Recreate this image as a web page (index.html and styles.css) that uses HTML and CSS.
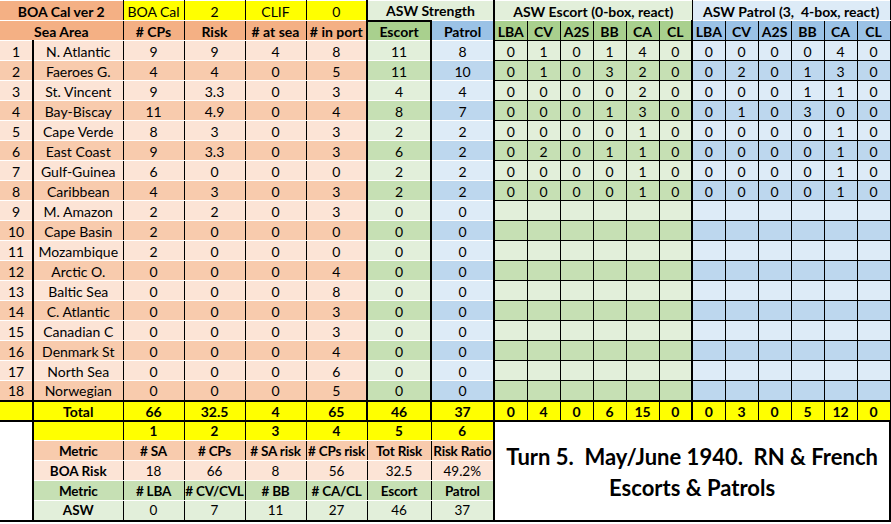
FILE: index.html
```html
<!DOCTYPE html>
<html>
<head>
<meta charset="utf-8">
<link rel="stylesheet" href="styles.css">
</head>
<body>
<table class="sheet">
<colgroup>
<col class="c-n"><col class="c-sa"><col class="c-o"><col class="c-o"><col class="c-o"><col class="c-o"><col class="c-g"><col class="c-b">
<col class="c-s"><col class="c-s"><col class="c-s"><col class="c-s"><col class="c-s"><col class="c-s">
<col class="c-s"><col class="c-s"><col class="c-s"><col class="c-s"><col class="c-s"><col class="c-s">
</colgroup>
<tbody>
<tr class="hdr1">
<td colspan="2" class="h-or bold first">BOA Cal ver 2</td>
<td class="y">BOA Cal</td><td class="y">2</td><td class="y">CLIF</td><td class="y">0</td>
<td colspan="2" class="h-gl bold tl">ASW Strength</td>
<td colspan="6" class="h-gl bold tl">ASW Escort (0-box, react)</td>
<td colspan="6" class="h-bl bold">ASW Patrol (3,&nbsp; 4-box, react)</td>
</tr>
<tr class="hdr2 bold">
<td colspan="2" class="h-or first">Sea Area</td>
<td class="h-or">#&nbsp;CPs</td><td class="h-or">Risk</td><td class="h-or">#&nbsp;at sea</td><td class="h-or"># in port</td>
<td class="h-gm tl tt">Escort</td><td class="h-bm tl">Patrol</td>
<td class="h-gm sub tl">LBA</td><td class="h-gm sub">CV</td><td class="h-gm sub">A2S</td><td class="h-gm sub">BB</td><td class="h-gm sub">CA</td><td class="h-gm sub">CL</td>
<td class="h-bm sub tl">LBA</td><td class="h-bm sub">CV</td><td class="h-bm sub">A2S</td><td class="h-bm sub">BB</td><td class="h-bm sub">CA</td><td class="h-bm sub">CL</td>
</tr>
<tr class="lt"><td class="n first">1</td><td class="o tl">N. Atlantic</td><td class="o">9</td><td class="o">9</td><td class="o">4</td><td class="o">8</td><td class="g tl">11</td><td class="b tl">8</td>
<td class="g sub tl">0</td><td class="g sub">1</td><td class="g sub">0</td><td class="g sub">1</td><td class="g sub">4</td><td class="g sub">0</td>
<td class="b sub tl">0</td><td class="b sub">0</td><td class="b sub">0</td><td class="b sub">0</td><td class="b sub">4</td><td class="b sub">0</td></tr>
<tr class="dk"><td class="n first">2</td><td class="o tl">Faeroes G.</td><td class="o">4</td><td class="o">4</td><td class="o">0</td><td class="o">5</td><td class="g tl">11</td><td class="b tl">10</td>
<td class="g sub tl">0</td><td class="g sub">1</td><td class="g sub">0</td><td class="g sub">3</td><td class="g sub">2</td><td class="g sub">0</td>
<td class="b sub tl">0</td><td class="b sub">2</td><td class="b sub">0</td><td class="b sub">1</td><td class="b sub">3</td><td class="b sub">0</td></tr>
<tr class="lt"><td class="n first">3</td><td class="o tl">St. Vincent</td><td class="o">9</td><td class="o">3.3</td><td class="o">0</td><td class="o">3</td><td class="g tl">4</td><td class="b tl">4</td>
<td class="g sub tl">0</td><td class="g sub">0</td><td class="g sub">0</td><td class="g sub">0</td><td class="g sub">2</td><td class="g sub">0</td>
<td class="b sub tl">0</td><td class="b sub">0</td><td class="b sub">0</td><td class="b sub">1</td><td class="b sub">1</td><td class="b sub">0</td></tr>
<tr class="dk"><td class="n first">4</td><td class="o tl">Bay-Biscay</td><td class="o">11</td><td class="o">4.9</td><td class="o">0</td><td class="o">4</td><td class="g tl">8</td><td class="b tl">7</td>
<td class="g sub tl">0</td><td class="g sub">0</td><td class="g sub">0</td><td class="g sub">1</td><td class="g sub">3</td><td class="g sub">0</td>
<td class="b sub tl">0</td><td class="b sub">1</td><td class="b sub">0</td><td class="b sub">3</td><td class="b sub">0</td><td class="b sub">0</td></tr>
<tr class="lt"><td class="n first">5</td><td class="o tl">Cape Verde</td><td class="o">8</td><td class="o">3</td><td class="o">0</td><td class="o">3</td><td class="g tl">2</td><td class="b tl">2</td>
<td class="g sub tl">0</td><td class="g sub">0</td><td class="g sub">0</td><td class="g sub">0</td><td class="g sub">1</td><td class="g sub">0</td>
<td class="b sub tl">0</td><td class="b sub">0</td><td class="b sub">0</td><td class="b sub">0</td><td class="b sub">1</td><td class="b sub">0</td></tr>
<tr class="dk"><td class="n first">6</td><td class="o tl">East Coast</td><td class="o">9</td><td class="o">3.3</td><td class="o">0</td><td class="o">3</td><td class="g tl">6</td><td class="b tl">2</td>
<td class="g sub tl">0</td><td class="g sub">2</td><td class="g sub">0</td><td class="g sub">1</td><td class="g sub">1</td><td class="g sub">0</td>
<td class="b sub tl">0</td><td class="b sub">0</td><td class="b sub">0</td><td class="b sub">0</td><td class="b sub">1</td><td class="b sub">0</td></tr>
<tr class="lt"><td class="n first">7</td><td class="o tl">Gulf-Guinea</td><td class="o">6</td><td class="o">0</td><td class="o">0</td><td class="o">0</td><td class="g tl">2</td><td class="b tl">2</td>
<td class="g sub tl">0</td><td class="g sub">0</td><td class="g sub">0</td><td class="g sub">0</td><td class="g sub">1</td><td class="g sub">0</td>
<td class="b sub tl">0</td><td class="b sub">0</td><td class="b sub">0</td><td class="b sub">0</td><td class="b sub">1</td><td class="b sub">0</td></tr>
<tr class="dk"><td class="n first">8</td><td class="o tl">Caribbean</td><td class="o">4</td><td class="o">3</td><td class="o">0</td><td class="o">3</td><td class="g tl">2</td><td class="b tl">2</td>
<td class="g sub tl">0</td><td class="g sub">0</td><td class="g sub">0</td><td class="g sub">0</td><td class="g sub">1</td><td class="g sub">0</td>
<td class="b sub tl">0</td><td class="b sub">0</td><td class="b sub">0</td><td class="b sub">0</td><td class="b sub">1</td><td class="b sub">0</td></tr>
<tr class="lt"><td class="n first">9</td><td class="o tl">M. Amazon</td><td class="o">2</td><td class="o">2</td><td class="o">0</td><td class="o">3</td><td class="g tl">0</td><td class="b tl">0</td>
<td class="g sub tl"></td><td class="g sub"></td><td class="g sub"></td><td class="g sub"></td><td class="g sub"></td><td class="g sub"></td>
<td class="b sub tl"></td><td class="b sub"></td><td class="b sub"></td><td class="b sub"></td><td class="b sub"></td><td class="b sub"></td></tr>
<tr class="dk"><td class="n first">10</td><td class="o tl">Cape Basin</td><td class="o">2</td><td class="o">0</td><td class="o">0</td><td class="o">0</td><td class="g tl">0</td><td class="b tl">0</td>
<td class="g sub tl"></td><td class="g sub"></td><td class="g sub"></td><td class="g sub"></td><td class="g sub"></td><td class="g sub"></td>
<td class="b sub tl"></td><td class="b sub"></td><td class="b sub"></td><td class="b sub"></td><td class="b sub"></td><td class="b sub"></td></tr>
<tr class="lt"><td class="n first">11</td><td class="o tl">Mozambique</td><td class="o">2</td><td class="o">0</td><td class="o">0</td><td class="o">0</td><td class="g tl">0</td><td class="b tl">0</td>
<td class="g sub tl"></td><td class="g sub"></td><td class="g sub"></td><td class="g sub"></td><td class="g sub"></td><td class="g sub"></td>
<td class="b sub tl"></td><td class="b sub"></td><td class="b sub"></td><td class="b sub"></td><td class="b sub"></td><td class="b sub"></td></tr>
<tr class="dk"><td class="n first">12</td><td class="o tl">Arctic O.</td><td class="o">0</td><td class="o">0</td><td class="o">0</td><td class="o">4</td><td class="g tl">0</td><td class="b tl">0</td>
<td class="g sub tl"></td><td class="g sub"></td><td class="g sub"></td><td class="g sub"></td><td class="g sub"></td><td class="g sub"></td>
<td class="b sub tl"></td><td class="b sub"></td><td class="b sub"></td><td class="b sub"></td><td class="b sub"></td><td class="b sub"></td></tr>
<tr class="lt"><td class="n first">13</td><td class="o tl">Baltic Sea</td><td class="o">0</td><td class="o">0</td><td class="o">0</td><td class="o">8</td><td class="g tl">0</td><td class="b tl">0</td>
<td class="g sub tl"></td><td class="g sub"></td><td class="g sub"></td><td class="g sub"></td><td class="g sub"></td><td class="g sub"></td>
<td class="b sub tl"></td><td class="b sub"></td><td class="b sub"></td><td class="b sub"></td><td class="b sub"></td><td class="b sub"></td></tr>
<tr class="dk"><td class="n first">14</td><td class="o tl">C. Atlantic</td><td class="o">0</td><td class="o">0</td><td class="o">0</td><td class="o">3</td><td class="g tl">0</td><td class="b tl">0</td>
<td class="g sub tl"></td><td class="g sub"></td><td class="g sub"></td><td class="g sub"></td><td class="g sub"></td><td class="g sub"></td>
<td class="b sub tl"></td><td class="b sub"></td><td class="b sub"></td><td class="b sub"></td><td class="b sub"></td><td class="b sub"></td></tr>
<tr class="lt"><td class="n first">15</td><td class="o tl">Canadian C</td><td class="o">0</td><td class="o">0</td><td class="o">0</td><td class="o">3</td><td class="g tl">0</td><td class="b tl">0</td>
<td class="g sub tl"></td><td class="g sub"></td><td class="g sub"></td><td class="g sub"></td><td class="g sub"></td><td class="g sub"></td>
<td class="b sub tl"></td><td class="b sub"></td><td class="b sub"></td><td class="b sub"></td><td class="b sub"></td><td class="b sub"></td></tr>
<tr class="dk"><td class="n first">16</td><td class="o tl">Denmark St</td><td class="o">0</td><td class="o">0</td><td class="o">0</td><td class="o">4</td><td class="g tl">0</td><td class="b tl">0</td>
<td class="g sub tl"></td><td class="g sub"></td><td class="g sub"></td><td class="g sub"></td><td class="g sub"></td><td class="g sub"></td>
<td class="b sub tl"></td><td class="b sub"></td><td class="b sub"></td><td class="b sub"></td><td class="b sub"></td><td class="b sub"></td></tr>
<tr class="lt"><td class="n first">17</td><td class="o tl">North Sea</td><td class="o">0</td><td class="o">0</td><td class="o">0</td><td class="o">6</td><td class="g tl">0</td><td class="b tl">0</td>
<td class="g sub tl"></td><td class="g sub"></td><td class="g sub"></td><td class="g sub"></td><td class="g sub"></td><td class="g sub"></td>
<td class="b sub tl"></td><td class="b sub"></td><td class="b sub"></td><td class="b sub"></td><td class="b sub"></td><td class="b sub"></td></tr>
<tr class="dk"><td class="n first">18</td><td class="o tl">Norwegian</td><td class="o">0</td><td class="o">0</td><td class="o">0</td><td class="o">5</td><td class="g tl">0</td><td class="b tl">0</td>
<td class="g sub tl"></td><td class="g sub"></td><td class="g sub"></td><td class="g sub"></td><td class="g sub"></td><td class="g sub"></td>
<td class="b sub tl"></td><td class="b sub"></td><td class="b sub"></td><td class="b sub"></td><td class="b sub"></td><td class="b sub"></td></tr>
<tr class="total bold">
<td class="first"></td><td class="tl">Total</td><td>66</td><td>32.5</td><td>4</td><td>65</td><td class="tl">46</td><td class="tl">37</td>
<td class="tl">0</td><td>4</td><td>0</td><td>6</td><td>15</td><td>0</td>
<td class="tl">0</td><td>3</td><td>0</td><td>5</td><td>12</td><td>0</td>
</tr>
<tr class="sum sum-y bold">
<td rowspan="5" class="blank first"></td>
<td class="tl"></td><td>1</td><td>2</td><td>3</td><td>4</td><td>5</td><td>6</td>
<td colspan="12" rowspan="5" class="title tl">
<div class="title-text">Turn 5.&nbsp; May/June 1940.&nbsp; RN &amp; French<br>Escorts &amp; Patrols</div>
</td>
</tr>
<tr class="sum sum-oh bold">
<td class="tl">Metric</td><td># SA</td><td># CPs</td><td># SA risk</td><td># CPs risk</td><td>Tot Risk</td><td>Risk Ratio</td>
</tr>
<tr class="sum sum-ol">
<td class="tl bold">BOA Risk</td><td>18</td><td>66</td><td>8</td><td>56</td><td>32.5</td><td>49.2%</td>
</tr>
<tr class="sum sum-gh bold">
<td class="tl">Metric</td><td># LBA</td><td># CV/CVL</td><td># BB</td><td># CA/CL</td><td>Escort</td><td>Patrol</td>
</tr>
<tr class="sum sum-gl last">
<td class="tl bold">ASW</td><td>0</td><td>7</td><td>11</td><td>27</td><td>46</td><td>37</td>
</tr>
</tbody>
</table>
</body>
</html>
```
FILE: styles.css
```css
html, body {
  margin: 0;
  padding: 0;
  background: #ffffff;
}

.sheet {
  border-collapse: collapse;
  table-layout: fixed;
  width: 890px;
  font-family: Lato, "Liberation Sans", sans-serif;
  font-size: 14px;
  color: #000;
}

.c-n { width: 33px; }
.c-sa { width: 90px; }
.c-o { width: 61px; }
.c-g { width: 64px; }
.c-b { width: 63px; }
.c-s { width: 33px; }

.sheet tr { height: 20px; }

.sheet td {
  padding: 1px 0 0 0;
  text-align: center;
  vertical-align: middle;
  white-space: nowrap;
  overflow: hidden;
  line-height: 17px;
  border-top: 1px solid #ffffff;
  border-bottom: 1px solid #ffffff;
  border-left: 1px solid #000;
  border-right: 1px solid #000;
}

.sheet .sum td { font-size: 13.5px; }
.sheet .sum-oh td, .sheet .sum-gh td { letter-spacing: -0.2px; }

.bold { font-weight: 700; }

.sheet td.first { border-left: 0; }
.sheet td.tl { border-left: 2px solid #000; }
.sheet td.tt { border-top: 2px solid #000; }
.sheet td.sub { border-top: 1px solid #000; border-bottom: 1px solid #000; }

/* header rows */
.h-or { background: #f4b084; }
.y { background: #ffff00; }
.h-gl { background: #e2efda; }
.h-bl { background: #ddebf7; }
.h-gm { background: #a9d08e; }
.h-bm { background: #9bc2e6; }

/* data rows */
.lt .n, .lt .o { background: #fce4d6; }
.dk .n, .dk .o { background: #f8cbad; }
.lt .g { background: #e2efda; }
.dk .g { background: #c6e0b4; }
.lt .b { background: #ddebf7; }
.dk .b { background: #bdd7ee; }

/* total row */
.total td {
  background: #ffff00;
  border-top: 2px solid #000;
  border-bottom: 2px solid #000;
}

/* summary block */
.sum-y td { background: #ffff00; }
.sum-oh td { background: #f8cbad; }
.sum-ol td { background: #fce4d6; }
.sum-gh td { background: #c6e0b4; }
.sum-gl td { background: #e2efda; }
.last td { border-bottom: 2px solid #000; }

.sheet td.blank {
  background: #ffffff;
  border-bottom: 2px solid #000;
}

.sheet td.title {
  background: #ffffff;
  border-right: 2px solid #000;
  border-bottom: 2px solid #000;
  vertical-align: middle;
  padding: 0;
}

.sheet .sum td.title .title-text,
.title-text {
  font-size: 22px;
  font-weight: 700;
  line-height: 31px;
  letter-spacing: 0;
  text-align: center;
  white-space: nowrap;
  padding-top: 2px;
}
```
